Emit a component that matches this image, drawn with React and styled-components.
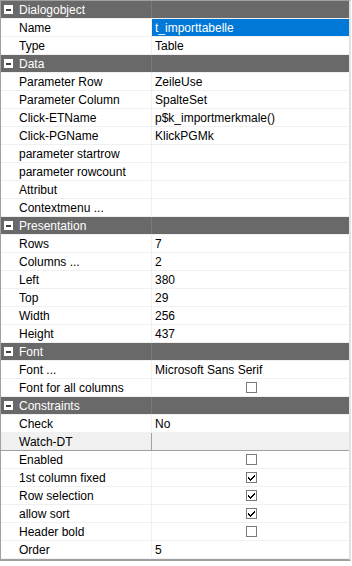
import React from 'react';
import styled, { createGlobalStyle } from 'styled-components';

const Global = createGlobalStyle`
  html, body {
    margin: 0;
    padding: 0;
    background: #ffffff;
  }
  body {
    font-family: "Liberation Sans", Arial, sans-serif;
    font-size: 12px;
  }
`;

const Grid = styled.div`
  width: 348px;
  border-left: 1px solid #a0a0a0;
  border-top: 1px solid #a0a0a0;
  border-right: 2px solid #e3e3e3;
  border-bottom: 2px solid #a0a0a0;
  background: #ffffff;
`;

const Row = styled.div`
  display: flex;
  height: 17px;
  border-bottom: 1px solid ${p => (p.$watch ? '#a0a0a0' : '#f0f0f0')};
  background: ${p => (p.$header ? '#696969' : p.$watch ? '#f0f0f0' : '#ffffff')};
  color: ${p => (p.$header ? '#ffffff' : '#000000')};
`;

const Label = styled.div`
  position: relative;
  width: 132px;
  padding-left: 18px;
  border-right: 1px solid ${p => (p.$header ? '#7a7a7a' : p.$watch ? '#a0a0a0' : '#f0f0f0')};
  display: flex;
  align-items: center;
  white-space: nowrap;
  overflow: hidden;
`;

const Value = styled.div`
  flex: 1;
  display: flex;
  align-items: center;
  justify-content: ${p => (p.$center ? 'center' : 'flex-start')};
  padding-left: ${p => (p.$center ? '0' : '3px')};
  background: ${p => (p.$selected ? '#0078d7' : 'transparent')};
  color: ${p => (p.$selected ? '#ffffff' : 'inherit')};
  white-space: nowrap;
`;

const Toggle = styled.svg`
  position: absolute;
  left: 3px;
  top: 4px;
`;

const Box = styled.svg`
  display: block;
  margin-left: 1px;
`;

function Minus() {
  return (
    <Toggle width="9" height="9" viewBox="0 0 9 9">
      <rect x="0" y="0" width="9" height="9" fill="#ffffff" />
      <rect x="2" y="4" width="5" height="2" fill="#404040" />
    </Toggle>
  );
}

function Check({ on }) {
  return (
    <Box width="11" height="11" viewBox="0 0 11 11">
      <rect x="0.5" y="0.5" width="10" height="10" fill="#ffffff" stroke="#7a7a7a" />
      {on && (
        <path
          d="M2 5h1v1h1v1h1v-1h1v-1h1v-1h1v-1h1v2h-1v1h-1v1h-1v1h-1v1h-1v-1h-1v-1h-1z"
          fill="#000000"
          shapeRendering="crispEdges"
        />
      )}
    </Box>
  );
}

const sections = [
  {
    title: 'Dialogobject',
    items: [
      { label: 'Name', value: 't_importtabelle', selected: true },
      { label: 'Type', value: 'Table' },
    ],
  },
  {
    title: 'Data',
    items: [
      { label: 'Parameter Row', value: 'ZeileUse' },
      { label: 'Parameter Column', value: 'SpalteSet' },
      { label: 'Click-ETName', value: 'p$k_importmerkmale()' },
      { label: 'Click-PGName', value: 'KlickPGMk' },
      { label: 'parameter startrow', value: '' },
      { label: 'parameter rowcount', value: '' },
      { label: 'Attribut', value: '' },
      { label: 'Contextmenu ...', value: '' },
    ],
  },
  {
    title: 'Presentation',
    items: [
      { label: 'Rows', value: '7' },
      { label: 'Columns ...', value: '2' },
      { label: 'Left', value: '380' },
      { label: 'Top', value: '29' },
      { label: 'Width', value: '256' },
      { label: 'Height', value: '437' },
    ],
  },
  {
    title: 'Font',
    items: [
      { label: 'Font ...', value: 'Microsoft Sans Serif' },
      { label: 'Font for all columns', check: false },
    ],
  },
  {
    title: 'Constraints',
    items: [
      { label: 'Check', value: 'No' },
      { label: 'Watch-DT', value: '', watch: true },
      { label: 'Enabled', check: false },
      { label: '1st column fixed', check: true },
      { label: 'Row selection', check: true },
      { label: 'allow sort', check: true },
      { label: 'Header bold', check: false },
      { label: 'Order', value: '5' },
    ],
  },
];

export default function App() {
  return (
    <>
      <Global />
      <Grid>
        {sections.map(sec => (
          <React.Fragment key={sec.title}>
            <Row $header>
              <Label $header>
                <Minus />
                {sec.title}
              </Label>
              <Value />
            </Row>
            {sec.items.map(it => (
              <Row key={it.label} $watch={it.watch}>
                <Label $watch={it.watch}>{it.label}</Label>
                {it.check !== undefined ? (
                  <Value $center>
                    <Check on={it.check} />
                  </Value>
                ) : (
                  <Value $selected={it.selected}>{it.value}</Value>
                )}
              </Row>
            ))}
          </React.Fragment>
        ))}
      </Grid>
    </>
  );
}
